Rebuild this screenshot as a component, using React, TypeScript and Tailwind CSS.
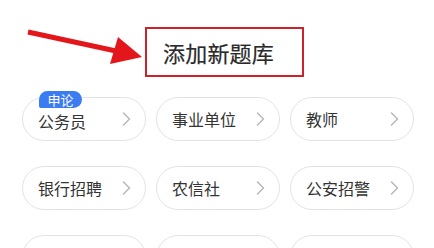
import React from "react";

const rows: { label: string; badge?: string }[][] = [
  [{ label: "公务员", badge: "申论" }, { label: "事业单位" }, { label: "教师" }],
  [{ label: "银行招聘" }, { label: "农信社" }, { label: "公安招警" }],
  [{ label: "医疗卫生" }, { label: "考研" }, { label: "军队文职" }],
];

function Chevron() {
  return (
    <svg width="9" height="14" viewBox="0 0 9 14" fill="none">
      <path d="M1.5 1 L7.5 7 L1.5 13" stroke="#b8b8b8" strokeWidth="1.5" strokeLinecap="round" strokeLinejoin="round" />
    </svg>
  );
}

export default function App() {
  return (
    <div
      className="relative w-[434px] h-[248px] overflow-hidden bg-white"
      style={{ fontFamily: '"Noto Sans CJK SC", "Noto Sans", sans-serif' }}
    >
      <div className="pt-[27px]">
        <div className="ml-[145px] w-[159px] h-[50px] border-2 border-[#cc2229] flex items-center pl-[16px]">
          <span className="text-[22px] leading-none font-normal text-[#2a2a2a] tracking-[0.2px] [-webkit-text-stroke:0.2px_#2a2a2a]">添加新题库</span>
        </div>
        <div className="mt-[20px] pl-[22px] grid grid-cols-[124px_124px_124px] gap-x-[10px] gap-y-[25px]">
          {rows.flat().map((item) => (
            <div
              key={item.label}
              className="relative h-[44px] rounded-full border border-[#e3e3e3] bg-white flex items-center justify-between pl-[15px] pr-[14px]"
            >
              {item.badge && (
                <div className="absolute left-[16px] top-[-7px] w-[43px] h-[17px] bg-[#3b7cf2] rounded-tl-[9px] rounded-tr-[9px] rounded-br-[9px] rounded-bl-[2px] flex items-center justify-center">
                  <span className="text-[13px] leading-none text-white">{item.badge}</span>
                </div>
              )}
              <span className={`text-[16px] leading-none text-[#333333] ${item.badge ? "mt-[4px]" : ""}`}>{item.label}</span>
              <Chevron />
            </div>
          ))}
        </div>
      </div>
      <svg className="absolute left-0 top-0" width="434" height="100" viewBox="0 0 434 100">
        <line x1="28" y1="32" x2="116" y2="51" stroke="#e3161c" strokeWidth="5" />
        <polygon points="118,37 142,57 110,64" fill="#e3161c" />
      </svg>
    </div>
  );
}
